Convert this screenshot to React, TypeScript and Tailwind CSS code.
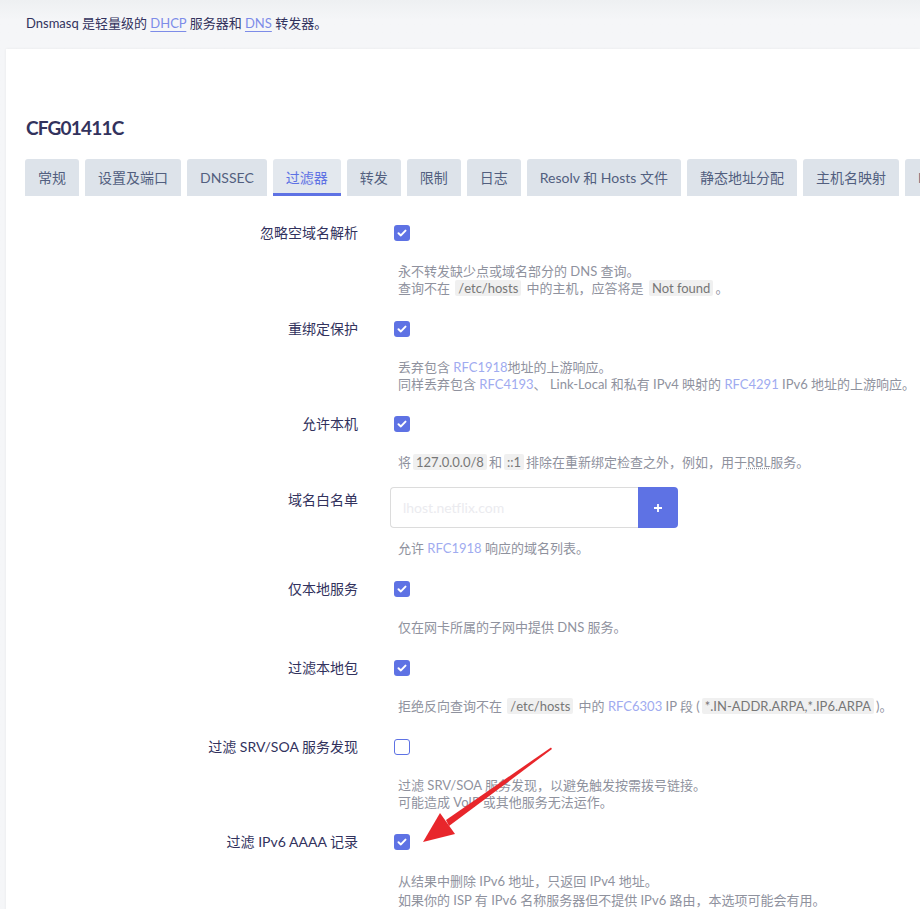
import React from "react";

const font = { fontFamily: 'Lato, "Noto Sans CJK SC", sans-serif' };

function Code({ children }: { children: React.ReactNode }) {
  return <span className="bg-[#f0f0f0] text-[#777] px-[3px] mx-[2px] rounded-[2px]">{children}</span>;
}
function L({ children }: { children: React.ReactNode }) {
  return <span className="text-[#a0abf0]">{children}</span>;
}

function Check({ on = true }: { on?: boolean }) {
  return (
    <div className="h-[24px] flex items-center pl-[4px]">
      {on ? (
        <div className="w-[16px] h-[16px] rounded-[3px] bg-[#5e72e4] flex items-center justify-center">
          <svg width="10" height="8" viewBox="0 0 10 8" fill="none">
            <path d="M1.5 4.2 L3.9 6.4 L8.5 1.6" stroke="white" strokeWidth="2" strokeLinecap="round" strokeLinejoin="round" />
          </svg>
        </div>
      ) : (
        <div className="w-[16px] h-[16px] rounded-[3px] bg-white border-[1.5px] border-[#5e72e4]" />
      )}
    </div>
  );
}

function Row({
  label,
  children,
  desc,
  pb = "pb-[19px]",
}: {
  label: string;
  children: React.ReactNode;
  desc: React.ReactNode;
  pb?: string;
}) {
  return (
    <div className={`flex ${pb}`}>
      <div className="w-[352px] shrink-0 text-right text-[14px] leading-[24px] text-[#32325d]">{label}</div>
      <div className="ml-[32px] flex flex-col">
        {children}
        {desc}
      </div>
    </div>
  );
}

function Desc({ children, mt = "mt-[18px]" }: { children: React.ReactNode; mt?: string }) {
  return <div className={`${mt} pl-[8px] text-[13px] leading-[17px] text-[#8f929e] whitespace-nowrap`}>{children}</div>;
}

const tabs = ["常规", "设置及端口", "DNSSEC", "过滤器", "转发", "限制", "日志", "Resolv 和 Hosts 文件", "静态地址分配", "主机名映射", "IP 集"];

export default function App() {
  return (
    <div style={font} className="relative w-[920px] h-[909px] overflow-hidden bg-gradient-to-b from-[#eef0f2] to-[#f5f6f8] to-[20px]">
      <div className="h-[49px] pl-[26px] pt-[14px] text-[13px] leading-[18px] text-[#32325d]">
        Dnsmasq 是轻量级的 <span className="text-[#7d8ce8] underline underline-offset-[3px] decoration-[#7d8ce8]">DHCP</span> 服务器和{" "}
        <span className="text-[#7d8ce8] underline underline-offset-[3px] decoration-[#7d8ce8]">DNS</span> 转发器。
      </div>
      <div className="ml-[6px] bg-white h-[900px] shadow-[0_0_3px_rgba(0,0,0,0.06)]">
        <div className="pl-[20px] pt-[66px] text-[19px] leading-[26px] font-bold tracking-[-0.8px] text-[#32325d]">CFG01411C</div>
        <div className="mt-[18px] pl-[19px] flex gap-[6px] overflow-hidden whitespace-nowrap">
          {tabs.map((t) => {
            const active = t === "过滤器";
            return (
              <div
                key={t}
                className={`shrink-0 h-[37px] px-[13px] flex items-center text-[14px] rounded-t-[3px] ${
                  active
                    ? "bg-[#e3e8ee] text-[#5e72e4] border-b-[3px] border-[#5e72e4] pt-[3px]"
                    : "bg-[#dde3ea] text-[#525f7f]"
                }`}
              >
                {t}
              </div>
            );
          })}
        </div>
        <div className="pt-[25px]">
          <Row
            label="忽略空域名解析"
            pb="pb-[20px]"
            desc={
              <Desc>
                <div>永不转发缺少点或域名部分的 DNS 查询。</div>
                <div>
                  查询不在 <Code>/etc/hosts</Code> 中的主机，应答将是 <Code>Not found</Code>。
                </div>
              </Desc>
            }
          >
            <Check />
          </Row>
          <Row
            label="重绑定保护"
            desc={
              <Desc>
                <div>
                  丢弃包含 <L>RFC1918</L>地址的上游响应。
                </div>
                <div>
                  同样丢弃包含 <L>RFC4193</L>、 Link-Local 和私有 IPv4 映射的 <L>RFC4291</L> IPv6 地址的上游响应。
                </div>
              </Desc>
            }
          >
            <Check />
          </Row>
          <Row
            label="允许本机"
            pb="pb-[17px]"
            desc={
              <Desc>
                <div>
                  将<Code>127.0.0.0/8</Code>和<Code>::1</Code>排除在重新绑定检查之外，例如，用于<span className="underline decoration-dotted">RBL</span>服务。
                </div>
              </Desc>
            }
          >
            <Check />
          </Row>
          <Row
            label="域名白名单"
            pb="pb-[20px]"
            desc={
              <Desc mt="mt-[12px]">
                <div>
                  允许 <L>RFC1918</L> 响应的域名列表。
                </div>
              </Desc>
            }
          >
            <div className="flex h-[41px] -mt-[1px]">
              <div className="w-[248px] h-[41px] border border-[#dcdcdc] border-r-0 rounded-l-[4px] flex items-center pl-[12px] text-[14px] text-[#ebebef]">
                lhost.netflix.com
              </div>
              <div className="w-[40px] h-[41px] bg-[#5e72e4] rounded-r-[4px] flex items-center justify-center">
                <svg width="10" height="10" viewBox="0 0 10 10">
                  <path d="M5 1 V9 M1 5 H9" stroke="white" strokeWidth="1.8" />
                </svg>
              </div>
            </div>
          </Row>
          <Row
            label="仅本地服务"
            pb="pb-[20px]"
            desc={
              <Desc>
                <div>仅在网卡所属的子网中提供 DNS 服务。</div>
              </Desc>
            }
          >
            <Check />
          </Row>
          <Row
            label="过滤本地包"
            pb="pb-[20px]"
            desc={
              <Desc>
                <div>
                  拒绝反向查询不在 <Code>/etc/hosts</Code> 中的 <L>RFC6303</L> IP 段 (<Code>*.IN-ADDR.ARPA,*.IP6.ARPA</Code>)。
                </div>
              </Desc>
            }
          >
            <Check />
          </Row>
          <Row
            label="过滤 SRV/SOA 服务发现"
            desc={
              <Desc>
                <div>过滤 SRV/SOA 服务发现，以避免触发按需拨号链接。</div>
                <div>可能造成 VoIP 或其他服务无法运作。</div>
              </Desc>
            }
          >
            <Check on={false} />
          </Row>
          <Row
            label="过滤 IPv6 AAAA 记录"
            desc={
              <Desc mt="mt-[19px]">
                <div>从结果中删除 IPv6 地址，只返回 IPv4 地址。</div>
                <div className="mt-[2px]">如果你的 ISP 有 IPv6 名称服务器但不提供 IPv6 路由，本选项可能会有用。</div>
              </Desc>
            }
          >
            <Check />
          </Row>
        </div>
      </div>
      <svg className="absolute left-0 top-0 pointer-events-none" width="920" height="909" viewBox="0 0 920 909">
        <path d="M552 749 L551 747.5 L446 820 L449 826 Z" fill="#e8262b" />
        <path d="M423 842 L440 813 L455 834 Z" fill="#e8262b" />
      </svg>
    </div>
  );
}
